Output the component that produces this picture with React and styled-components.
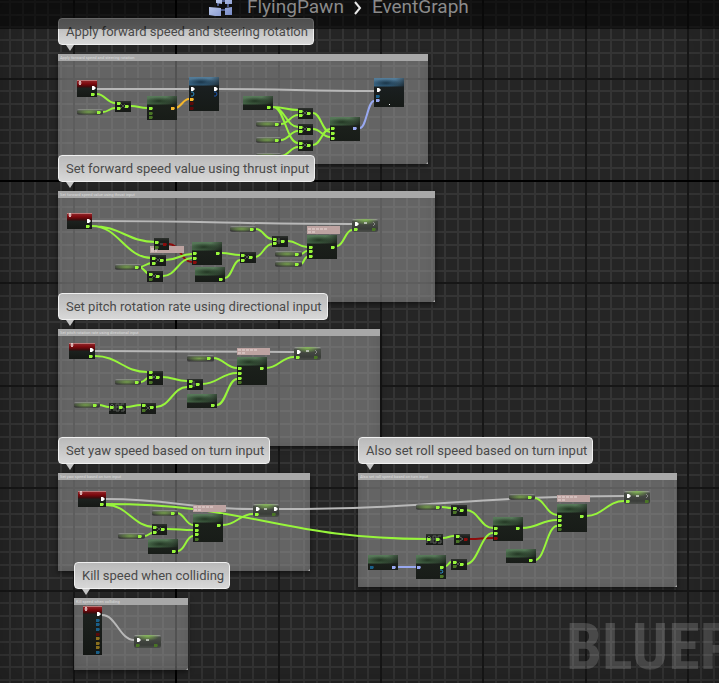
import React from "react";
import styled, { createGlobalStyle, css } from "styled-components";

const GlobalStyle = createGlobalStyle`
  * { box-sizing: border-box; }
  body { margin: 0; background: #252525; overflow: hidden; }
`;

const Page = styled.main`
  position: relative;
  min-height: 100vh;
  overflow: hidden;
  background: #252525;
  font-family: Roboto, "Noto Sans", sans-serif;
`;

const GridLines = styled.svg`
  position: absolute;
  inset: 0;
  width: 100%;
  height: 100%;
  shape-rendering: crispEdges;
`;

const Vignette = styled.div`
  position: absolute;
  inset: 0;
  z-index: 6;
  pointer-events: none;
  box-shadow: inset 0 0 40px rgba(0, 0, 0, 0.25);
`;

const Header = styled.header`
  position: absolute;
  z-index: 8;
  top: 0;
  left: 0;
  right: 0;
  height: 29px;
  padding-left: 208px;
  background: rgba(0, 0, 0, 0.55);
`;

const Breadcrumb = styled.nav`
  display: flex;
  align-items: center;
  height: 14px;
`;

const Crumb = styled.button`
  border: 0;
  padding: 0;
  background: none;
  color: #8a8a8a;
  font: 400 19px/20px Roboto, sans-serif;
  white-space: nowrap;
`;

const GraphIcon = styled.svg`
  flex: none;
  width: 26px;
  height: 18px;
  margin-right: 13px;
`;

const Chevron = styled.svg`
  flex: none;
  width: 8px;
  height: 14px;
  margin: 2px 10px 0 10px;
`;

const Comment = styled.section`
  position: absolute;
  left: ${(p) => p.$x}px;
  top: ${(p) => p.$y}px;
  width: ${(p) => p.$w}px;
  display: flex;
  flex-direction: column;
  align-items: flex-start;
  gap: 9px;
`;

const Bubble = styled.h2`
  position: relative;
  z-index: 5;
  margin: 0;
  padding: 1px 5px 0 7px;
  border: 1px solid #f0f0f0;
  border-radius: 4px;
  background: linear-gradient(rgba(188, 188, 188, 0.97), rgba(222, 222, 222, 0.97));
  color: #4a4a4a;
  font-size: 13px;
  font-weight: 400;
  line-height: 24px;
  white-space: nowrap;

  &::after {
    content: "";
    position: absolute;
    top: 100%;
    left: 7px;
    margin-top: 1px;
    border: 4px solid transparent;
    border-top: 6px solid #c4c4c4;
    border-bottom: 0;
  }
`;

const Box = styled.div`
  position: relative;
  align-self: stretch;
  height: ${(p) => p.$h}px;
  background: rgba(163, 163, 163, 0.5);
  box-shadow: 0 2px 5px rgba(0, 0, 0, 0.5), inset 0 0 10px rgba(40, 40, 40, 0.15);

  &::after {
    content: "";
    position: absolute;
    right: 0;
    bottom: 0;
    border: 1px solid #aaa;
    border-top-color: transparent;
    border-left-color: transparent;
  }
`;

const BoxTitle = styled.p`
  margin: 0;
  height: 7px;
  padding-left: 2px;
  overflow: hidden;
  background: #a8a8a8;
  color: #dcdcdc;
  font-size: 4px;
  line-height: 8px;
  white-space: nowrap;
`;

const Wires = styled.svg`
  position: absolute;
  inset: 0;
  z-index: 1;
  width: 100%;
  height: 100%;
  fill: none;
  stroke-width: 2;
`;

const Pins = styled(Wires)`
  z-index: 3;
  stroke-width: 1;
`;

const kinds = {
  event: css`
    background: linear-gradient(#8d2226, #7c080d 3px, #3a0b0c 6px, #1c211e 7px, #151815);
    border-top: 1px solid #b77;
  `,
  fn: css`
    background:
      radial-gradient(ellipse 14px 4px at 12px 5px, rgba(22, 36, 22, 0.75), transparent),
      linear-gradient(135deg, transparent 14px, rgba(22, 26, 22, 0.8) 26px) 0 0 / 100% 9px no-repeat,
      linear-gradient(#587a5a, #426244 8px, #1b201b 9px, #181c18);
  `,
  call: css`
    background:
      radial-gradient(ellipse 14px 4px at 12px 5px, rgba(14, 36, 52, 0.75), transparent),
      linear-gradient(135deg, transparent 16px, rgba(22, 26, 28, 0.8) 28px) 0 0 / 100% 9px no-repeat,
      linear-gradient(#557d99, #34607f 8px, #1a1f20 9px, #161a17);
  `,
  get: css`
    border-radius: 2px;
    background:
      radial-gradient(ellipse 13px 3px at 45% 50%, rgba(130, 180, 80, 0.8), transparent),
      linear-gradient(#999, #454a42 2px, #333 5px, #555);
  `,
  set: css`
    border-radius: 2px;
    background:
      radial-gradient(ellipse 12px 5px at 50% 1px, rgba(130, 185, 80, 0.9), transparent),
      linear-gradient(#aaa, #4a4f48 2px, #3a3d39 10px, #4c4f4b);
  `,
  op: css`
    background: linear-gradient(#2e322e, #1b1e1b 3px, #171a17);
  `,
  note: css`
    background: #bda3a1;
  `,
};

const Node = styled.div`
  position: absolute;
  z-index: 2;
  left: ${(p) => p.$x}px;
  top: ${(p) => p.$y}px;
  width: ${(p) => p.$w}px;
  height: ${(p) => p.$h}px;
  ${(p) => kinds[p.$kind]}
`;

const Watermark = styled.strong`
  position: absolute;
  left: 566px;
  bottom: 0;
  color: rgba(255, 255, 255, 0.17);
  font: 700 64px/70px "Roboto Condensed", "Open Sans Condensed", "Liberation Sans Narrow", "Noto Sans", sans-serif;
  white-space: nowrap;
`;

const comments = [
  { title: "Apply forward speed and steering rotation", x: 58, y: 18, w: 370, h: 110 },
  { title: "Set forward speed value using thrust input", x: 58, y: 155, w: 377, h: 111 },
  { title: "Set pitch rotation rate using directional input", x: 58, y: 293, w: 322, h: 117 },
  { title: "Set yaw speed based on turn input", x: 58, y: 437, w: 252, h: 98 },
  { title: "Also set roll speed based on turn input", x: 358, y: 437, w: 319, h: 114 },
  { title: "Kill speed when colliding", x: 74, y: 562, w: 114, h: 72 },
];

/* kind, x, y, width, height */
const nodes = [
  ["event", 77, 80, 20, 17], ["get", 77, 109, 26, 6], ["op", 115, 101, 16, 11],
  ["fn", 147, 96, 30, 24], ["call", 189, 77, 30, 34], ["fn", 243, 96, 30, 14],
  ["get", 256, 121, 25, 6], ["get", 256, 137, 25, 6], ["get", 256, 153, 25, 6],
  ["op", 298, 108, 15, 11], ["op", 298, 124, 15, 11], ["op", 298, 140, 15, 11],
  ["fn", 330, 117, 30, 24], ["call", 374, 78, 30, 29],

  ["event", 67, 213, 25, 16], ["note", 150, 246, 34, 7], ["op", 154, 238, 15, 12],
  ["op", 150, 255, 16, 11], ["get", 115, 264, 26, 6], ["op", 147, 271, 16, 11],
  ["fn", 192, 242, 30, 23], ["fn", 195, 267, 30, 15], ["get", 230, 226, 26, 6],
  ["op", 240, 252, 16, 11], ["op", 272, 236, 16, 11], ["get", 275, 251, 27, 6],
  ["get", 275, 261, 27, 6], ["note", 307, 226, 33, 8], ["fn", 307, 235, 30, 24],
  ["set", 352, 219, 26, 13],

  ["event", 69, 343, 26, 16], ["get", 115, 379, 26, 6], ["op", 147, 371, 16, 14],
  ["get", 74, 402, 26, 6], ["op", 109, 403, 17, 11], ["op", 141, 403, 15, 11],
  ["op", 187, 379, 16, 11], ["get", 187, 355, 27, 7], ["fn", 187, 394, 30, 14],
  ["note", 237, 348, 33, 7], ["fn", 237, 357, 30, 28], ["set", 294, 347, 27, 13],

  ["event", 78, 491, 28, 16], ["get", 152, 510, 26, 6], ["op", 152, 524, 15, 11],
  ["get", 118, 533, 27, 6], ["fn", 148, 539, 30, 15], ["note", 193, 505, 33, 7],
  ["fn", 193, 514, 30, 28], ["set", 253, 504, 26, 13],

  ["op", 426, 534, 17, 11], ["get", 416, 504, 25, 6], ["op", 451, 505, 16, 11],
  ["op", 454, 534, 16, 11], ["fn", 368, 555, 30, 15], ["fn", 416, 555, 30, 24],
  ["op", 451, 559, 16, 11], ["fn", 493, 517, 30, 24], ["fn", 506, 549, 30, 14],
  ["get", 509, 494, 26, 6], ["note", 557, 495, 33, 7], ["fn", 557, 504, 30, 28],
  ["set", 624, 491, 26, 13],

  ["event", 83, 606, 19, 49], ["set", 134, 635, 27, 13],
];

const colors = {
  white: "#b8b8b8", green: "#97f53b", yellow: "#f3b62c", red: "#8c0c0c", lav: "#98a8f0",
};

/* from x, from y, to x, to y */
const wires = {
  white: [
    [97, 89, 189, 89], [218, 89, 374, 91], [92, 221, 353, 224], [95, 351, 294, 352],
    [106, 499, 253, 509], [279, 509, 625, 496], [102, 615, 134, 640],
  ],
  yellow: [[175, 108, 189, 99]],
  red: [[169, 244, 192, 262], [470, 539, 493, 538]],
  lav: [[360, 128, 374, 101], [397, 567, 417, 567]],
  green: [
    [97, 94, 115, 103], [103, 112, 115, 108], [131, 106, 147, 108],
    [273, 107, 298, 110], [273, 107, 298, 127], [273, 107, 298, 143],
    [281, 124, 298, 115], [281, 140, 298, 131], [281, 156, 298, 147],
    [313, 113, 330, 132], [313, 129, 330, 137], [313, 145, 330, 129],

    [92, 226, 156, 242], [92, 226, 152, 258], [139, 267, 152, 263], [139, 267, 150, 274],
    [166, 260, 192, 254], [163, 276, 192, 258], [222, 253, 240, 255], [225, 278, 240, 260],
    [255, 257, 272, 244], [256, 229, 272, 239], [288, 241, 307, 247], [301, 254, 307, 251],
    [301, 264, 307, 257], [337, 246, 352, 230],

    [95, 356, 147, 372], [141, 382, 150, 377], [162, 377, 187, 381], [99, 405, 109, 407],
    [126, 407, 141, 405], [156, 407, 187, 387], [213, 358, 237, 368], [202, 384, 237, 373],
    [217, 405, 237, 379], [266, 368, 294, 357],

    [106, 505, 155, 527], [106, 504, 427, 539], [144, 536, 155, 532], [177, 513, 193, 525],
    [167, 529, 193, 530], [178, 551, 193, 536], [223, 525, 253, 514],

    [442, 507, 451, 508], [466, 510, 493, 528], [443, 538, 454, 536], [446, 566, 451, 562],
    [466, 564, 493, 533], [522, 528, 557, 520], [534, 498, 557, 515], [535, 560, 557, 526],
    [586, 516, 624, 501],
  ],
};

/* centre x, centre y of the connected pins */
const pins = {
  green: [
    [93, 94], [99, 112], [119, 103], [119, 108], [127, 106], [151, 108], [269, 107],
    [277, 124], [277, 140], [277, 156], [301, 111], [301, 115], [309, 113], [301, 127],
    [301, 131], [309, 129], [301, 143], [301, 147], [309, 145], [333, 128], [333, 133], [333, 138],
    [88, 226], [157, 242], [154, 258], [154, 263], [162, 260], [137, 267], [151, 274], [158, 276],
    [195, 253], [195, 258], [218, 253], [221, 279], [252, 229], [243, 255], [243, 260],
    [251, 257], [275, 239], [275, 243], [283, 241], [297, 254], [297, 264], [311, 247],
    [311, 251], [311, 256], [333, 247], [356, 229],
    [91, 356], [137, 382], [151, 372], [151, 377], [158, 377], [95, 405], [112, 407],
    [121, 407], [144, 405], [152, 407], [191, 381], [191, 386], [198, 384], [209, 358],
    [213, 405], [240, 368], [240, 373], [240, 378], [262, 368], [298, 357],
    [102, 504], [173, 513], [155, 527], [155, 532], [163, 529], [140, 536], [174, 551],
    [197, 525], [197, 530], [197, 534], [219, 525], [257, 514],
    [429, 539], [438, 539], [438, 507], [455, 508], [462, 510], [458, 536], [442, 567],
    [455, 562], [462, 564], [496, 528], [496, 533], [518, 528], [531, 560], [530, 497],
    [560, 516], [560, 520], [560, 525], [582, 516], [628, 501],
  ],
  faded: [
    [151, 113], [151, 117], [157, 247], [151, 279], [374, 229], [151, 382], [144, 410],
    [240, 382], [316, 357], [197, 539], [274, 514], [455, 512], [458, 541], [442, 576],
    [455, 566], [560, 529], [647, 501], [138, 645], [156, 645],
  ],
  yellow: [[173, 108], [192, 99]],
  amber: [[98, 638], [98, 643], [98, 647]],
  cyan: [[378, 96], [372, 567], [98, 620], [98, 624], [98, 629], [98, 652]],
  lav: [[355, 128], [378, 100], [394, 567], [419, 567]],
  darkRed: [[192, 103], [192, 108], [98, 634]],
  red: [[165, 244], [195, 262], [466, 539], [496, 538]],
};
const pinColors = {
  ...colors, faded: "#4a7526", amber: "#8a701e", cyan: "#1a5f88", darkRed: "#5a0a0a",
};

const execPins = [
  [93, 88], [192, 89], [215, 89], [378, 90], [88, 221], [356, 224], [91, 350], [298, 352],
  [102, 499], [257, 509], [275, 509], [628, 496], [98, 614], [138, 640],
];
const openExecPins = [[374, 224], [647, 496], [316, 352]];

/* operator marks: centre x, centre y */
const crosses = [
  [123, 106], [305, 113], [305, 129], [305, 145], [158, 260], [154, 276], [247, 257],
  [154, 377], [148, 408], [159, 529], [458, 510], [458, 564],
];
const pluses = [[279, 241], [194, 384]];
const absMarks = [[117, 411], [434, 543]];
const eventMarks = [[80, 83], [70, 215], [72, 345], [81, 493], [86, 609]];
const setMarks = [[365, 222], [307, 350], [265, 508], [637, 495], [147, 639]];

const GRID = 12.8;
const ORIGIN_X = 72.7;
const ORIGIN_Y = 77.5;
const REACH = 3840;

function gridPaths() {
  const out = { minor: "", major: "", axis: "" };
  for (let i = -8; i < REACH / GRID; i += 1) {
    const kind = i === 8 ? "axis" : i % 8 === 0 ? "major" : "minor";
    out[kind] += `M${Math.round(ORIGIN_X + i * GRID)} 0h2v${REACH}h-2z`;
    out[kind] += `M0 ${Math.round(ORIGIN_Y + i * GRID)}h${REACH}v2h-${REACH}z`;
  }
  return out;
}
const grid = gridPaths();

function wirePath([x1, y1, x2, y2]) {
  const bend = (x2 - x1) * 0.45;
  return `M${x1} ${y1}C${x1 + bend} ${y1} ${x2 - bend} ${y2} ${x2} ${y2}`;
}

const CommentBlock = ({ title, x, y, w, h }) => (
  <Comment $x={x} $y={y} $w={w}>
    <Bubble>{title}</Bubble>
    <Box $h={h}>
      <BoxTitle>{title}</BoxTitle>
    </Box>
  </Comment>
);

export default function App() {
  return (
    <Page>
      <GlobalStyle />
      <GridLines aria-hidden="true">
        <path d={grid.minor} fill="#343434" />
        <path d={grid.major} fill="#161616" />
        <path d={grid.axis} fill="#000" />
      </GridLines>
      <Watermark>BLUEPRINT</Watermark>

      {comments.map((c) => (
        <CommentBlock key={c.title} {...c} />
      ))}

      <Wires aria-hidden="true">
        {Object.entries(wires).map(([name, list]) => (
          <path key={name} stroke={colors[name]} d={list.map(wirePath).join("")} />
        ))}
      </Wires>

      {nodes.map(([kind, x, y, w, h]) => (
        <Node key={`${x}-${y}`} $kind={kind} $x={x} $y={y} $w={w} $h={h} />
      ))}

      <Pins aria-hidden="true">
        <path
          stroke="#4c504c"
          d={crosses.map(([x, y]) => `M${x - 2} ${y - 2}l4 4m0 -4l-4 4`).join("")}
        />
        <path stroke="#5c615c" d={pluses.map(([x, y]) => `M${x - 3} ${y}h6m-3 -3v6`).join("")} />
        <path
          stroke="#5a5e5a"
          d={absMarks
            .map(([x, y]) => `M${x - 7} ${y}v-5l2 -2l2 2v5m-4 -3h4M${x - 1} ${y}v-7h3v7zm0 -4h3M${x + 7} ${y - 7}h-3v4h3v3h-3`)
            .join("")}
        />
        <path stroke="#666" d="M460 537l3 2l-3 2M160 244h4" />
        <path
          stroke="#eedada"
          d={eventMarks.map(([x, y]) => `M${x - 1} ${y}l1 -2l1 2l-1 2z`).join("")}
        />
        <path fill="#b6bdb0" d={setMarks.map(([x, y]) => `M${x - 1} ${y}h3v2h-3z`).join("")} />
        <path
          stroke="#eadad8"
          strokeDasharray="3 1"
          d="M308 229h20M308 232h7M238 350h19M238 353h7M194 507h19M194 510h7M558 497h19M558 500h7M151 249h7M151 251h6"
        />
        <path
          stroke="#2a86bd"
          d="M191 92h2l1 2l-1 2h-2M440 570h2l1 2l-1 1h-2"
        />
        <path stroke="#1d54a8" d="M214 92h2l1 2l-1 2h-2" />
        {Object.entries(pins).map(([name, list]) => (
          <path
            key={name}
            fill={pinColors[name]}
            d={list.map(([x, y]) => `M${x - 2} ${y - 1}h3l1 1l-1 2h-3z`).join("")}
          />
        ))}
        <path fill="#fff" d={execPins.map(([x, y]) => `M${x - 1} ${y - 2}h2l2 2l-2 2h-2z`).join("")} />
        <path fill="#fff" d="M389 104h1v1h-1z" />
        <path stroke="#888" d={openExecPins.map(([x, y]) => `M${x - 1} ${y - 2}l2 2l-2 2`).join("")} />
      </Pins>

      <Vignette />

      <Header>
        <Breadcrumb aria-label="Graph path">
          <GraphIcon viewBox="0 0 26 18" aria-hidden="true">
            <defs>
              <linearGradient id="tile" x1="0" y1="0" x2="1" y2="1">
                <stop offset="0" stopColor="#cdd8f4" />
                <stop offset="1" stopColor="#7488c6" />
              </linearGradient>
            </defs>
            <path d="M10 5v3M20 4v5M13 12h4M14 3h3" stroke="#4a5684" strokeWidth="2" />
            <path d="M8 0h6v6l-6 -1zM17 0h7v6h-7zM1 9l12 1v9l-12 -2zM17 10l7 -1v8h-7z" fill="url(#tile)" />
          </GraphIcon>
          <Crumb type="button">FlyingPawn</Crumb>
          <Chevron viewBox="0 0 8 14" aria-hidden="true">
            <path d="M1 1l5 6l-5 6" fill="none" stroke="#e8e8e8" strokeWidth="2" />
          </Chevron>
          <Crumb type="button">EventGraph</Crumb>
        </Breadcrumb>
      </Header>
    </Page>
  );
}
